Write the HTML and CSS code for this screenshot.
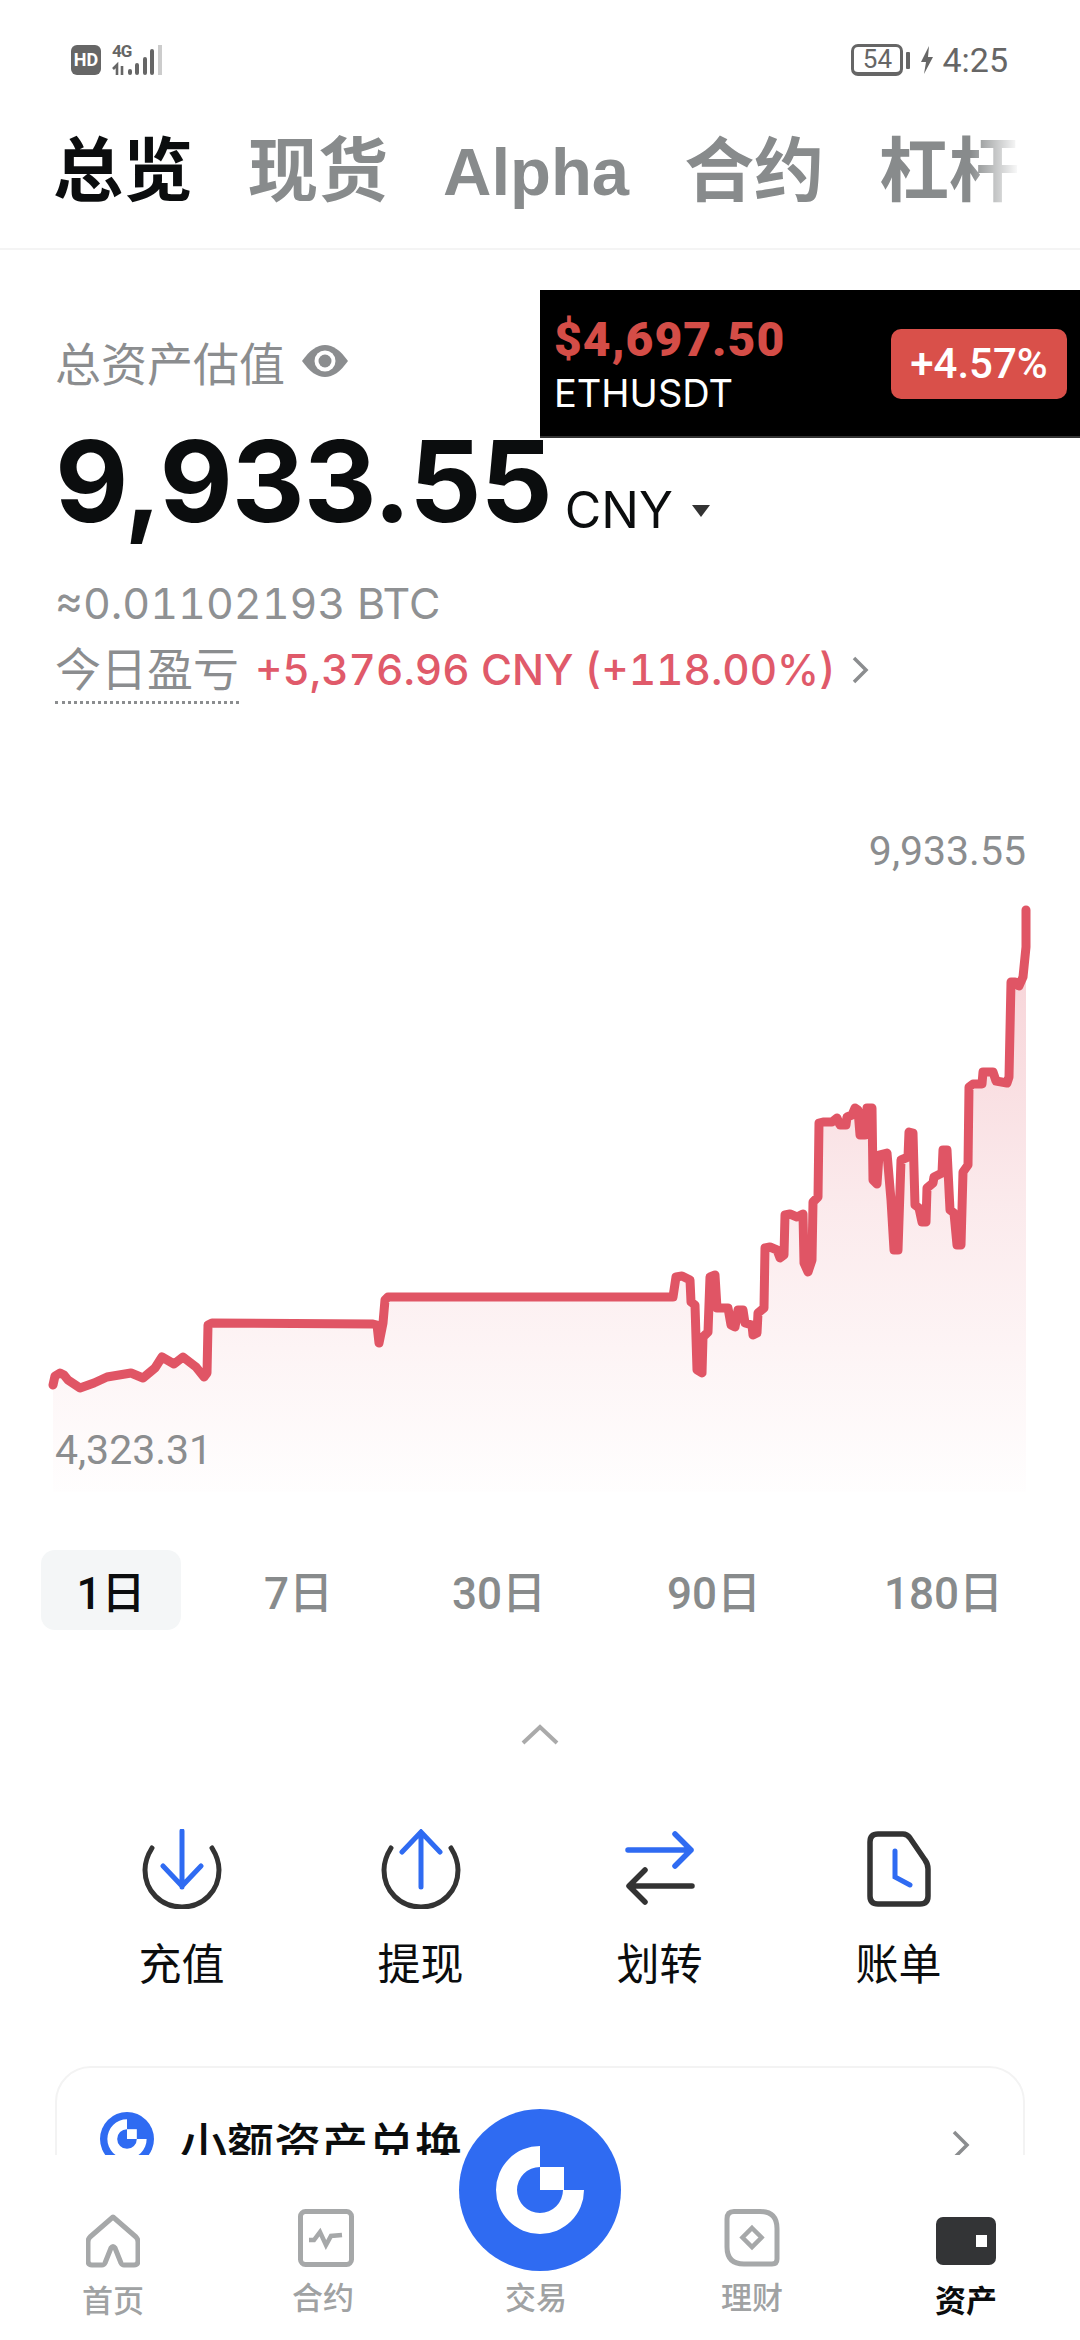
FILE: index.html
```html
<!DOCTYPE html>
<html lang="zh">
<head>
<meta charset="utf-8">
<title>资产总览</title>
<link rel="stylesheet" href="styles.css">
</head>
<body>
<div class="page">
  <main class="scroll">
    <header class="status">
      <div class="status-left">
        <span class="hd">HD</span>
        <span class="signal-wrap">
          <span class="sig-text">4G</span>
          <svg class="signal" width="44" height="30" viewBox="0 0 44 30">
            <path d="M1 24l4-4v10M10 21v9" stroke="#666" stroke-width="2.600" fill="none"/>
            <path d="M18 26v2M25 20v8M33 14v14M40 6v22" stroke="#666" stroke-width="4" fill="none" stroke-linecap="round"/>
          </svg>
        </span>
        <span class="signal-off"></span>
      </div>
      <div class="status-right">
        <span class="battery">54</span>
        <span class="battery-cap"></span>
        <svg class="bolt" width="14" height="28" viewBox="0 0 14 28"><path d="M9 0 1 16h5l-2 12 9-17H8z" fill="#666"/></svg>
        <span class="time">4:25</span>
      </div>
    </header>

    <nav class="tabs">
      <span class="tab tab-on">总览</span>
      <span class="tab">现货</span>
      <span class="tab tab-latin">Alpha</span>
      <span class="tab">合约</span>
      <span class="tab tab-fade">杠杆</span>
    </nav>

    <section class="summary">
      <div class="label-row">
        <span class="label">总资产估值</span>
        <svg class="eye" width="46" height="32" viewBox="0 0 46 32">
          <path d="M0 16C8 5 15 0 23 0s15 5 23 16c-8 11-15 16-23 16S8 27 0 16z" fill="#8b8d8f"/>
          <circle cx="23" cy="16" r="10.500" fill="#fff"/>
          <circle cx="23" cy="16" r="6.500" fill="#8b8d8f"/>
        </svg>
      </div>
      <div class="total-row">
        <span class="total">9,933.55</span>
        <span class="unit">CNY</span>
        <span class="caret"></span>
      </div>
      <div class="btc">≈0.01102193 BTC</div>
      <div class="pnl-row">
        <span class="pnl-label">今日盈亏</span>
        <span class="pnl">+5,376.96 CNY (+118.00%)</span>
        <svg class="pnl-chev" width="20" height="30" viewBox="0 0 20 30"><path d="M4 3l12 12L4 27" fill="none" stroke="#8b8d8f" stroke-width="3.500"/></svg>
      </div>
    </section>

    <section class="chart">
      <svg class="chart-svg" width="1080" height="680" viewBox="0 820 1080 680">
        <defs>
          <linearGradient id="area" gradientUnits="userSpaceOnUse" x1="0" y1="910" x2="0" y2="1510">
            <stop offset="0" stop-color="#e05565" stop-opacity=".28"/>
            <stop offset=".5" stop-color="#e05565" stop-opacity=".12"/>
            <stop offset="1" stop-color="#e05565" stop-opacity="0"/>
          </linearGradient>
        </defs>
        <path fill="url(#area)" d="M53 1385L60 1373 68 1380 80 1388 94 1383 107 1377 131 1373 143 1378 155 1368 162 1357 174 1364 183 1357 196 1367 204 1377 207 1373 208 1325 212 1323 373 1324 377 1325 379 1343 383 1323 385 1297 673 1297 676 1277 682 1276 690 1280 691 1302 695 1305 697 1370 702 1373 703 1337 708 1332 710 1277 715 1275 717 1308 728 1308 731 1325 735 1327 738 1310 743 1310 745 1323 752 1325 753 1335 757 1333 758 1313 764 1308 765 1248 770 1247 777 1250 780 1258 784 1255 785 1215 790 1214 797 1217 803 1214 804 1263 808 1272 812 1260 813 1202 818 1197 819 1123 823 1122 832 1122 837 1118 840 1125 846 1125 847 1117 852 1115 855 1108 858 1110 860 1135 865 1135 867 1108 872 1108 873 1180 877 1184 879 1155 887 1153 891 1200 894 1250 898 1250 901 1160 908 1157 909 1132 913 1133 915 1205 919 1208 922 1222 926 1222 927 1188 933 1183 934 1177 942 1173 943 1150 947 1150 950 1210 954 1213 957 1245 961 1245 963 1172 968 1165 969 1087 973 1084 982 1084 983 1072 993 1072 996 1081 1007 1083 1009 1077 1011 982 1015 982 1019 986 1023 977 1026 947 1026 910V1492H53Z"/>
        <path fill="none" stroke="#e05565" stroke-width="9" stroke-linejoin="round" stroke-linecap="round" d="M53 1385L55 1376 60 1373 64 1375 68 1380 80 1388 94 1383 107 1377 131 1373 143 1378 155 1368 162 1357 174 1364 183 1357 196 1367 204 1377 207 1373 208 1325 212 1323 373 1324 377 1325 379 1343 383 1323 385 1300 388 1297 673 1297 676 1277 682 1276 690 1280 691 1302 695 1305 697 1370 702 1373 703 1337 708 1332 710 1277 715 1275 717 1308 728 1308 731 1325 735 1327 738 1310 743 1310 745 1323 752 1325 753 1335 757 1333 758 1313 764 1308 765 1248 770 1247 777 1250 780 1258 784 1255 785 1215 790 1214 797 1217 803 1214 804 1263 808 1272 812 1260 813 1202 818 1197 819 1123 823 1122 832 1122 837 1118 840 1125 846 1125 847 1117 852 1115 855 1108 858 1110 860 1135 865 1135 867 1108 872 1108 873 1180 877 1184 879 1155 887 1153 891 1200 894 1250 898 1250 901 1160 908 1157 909 1132 913 1133 915 1205 919 1208 922 1222 926 1222 927 1188 933 1183 934 1177 942 1173 943 1150 947 1150 950 1210 954 1213 957 1245 961 1245 963 1172 968 1165 969 1087 973 1084 982 1084 983 1072 993 1072 996 1081 1007 1083 1009 1077 1011 982 1015 982 1019 986 1023 977 1026 947 1026 910"/>
      </svg>
      <span class="chart-max">9,933.55</span>
      <span class="chart-min">4,323.31</span>
    </section>

    <div class="ranges">
      <span class="range range-on">1日</span>
      <span class="range r7">7日</span>
      <span class="range r30">30日</span>
      <span class="range r90">90日</span>
      <span class="range r180">180日</span>
    </div>

    <div class="collapse">
      <svg width="38" height="22" viewBox="0 0 38 22"><path d="M2 20L19 4l17 16" fill="none" stroke="#aaa" stroke-width="4"/></svg>
    </div>

    <div class="actions">
      <div class="action">
        <svg class="action-icon" width="80" height="80" viewBox="0 0 80 80">
          <path d="M10 19C5 27 3 34 3 41c0 21 16 37 37 37s37-16 37-37c0-7-2-14-7-22" fill="none" stroke="#333" stroke-width="5" stroke-linecap="round"/>
          <path d="M40 2v56M21 37l19 20 19-20" fill="none" stroke="#2f6bf2" stroke-width="5" stroke-linecap="round"/>
        </svg>
        <span>充值</span>
      </div>
      <div class="action">
        <svg class="action-icon" width="80" height="80" viewBox="0 0 80 80">
          <path d="M10 19C5 27 3 34 3 41c0 21 16 37 37 37s37-16 37-37c0-7-2-14-7-22" fill="none" stroke="#333" stroke-width="5" stroke-linecap="round"/>
          <path d="M40 58V3M21 23L40 3l19 20" fill="none" stroke="#2f6bf2" stroke-width="5" stroke-linecap="round"/>
        </svg>
        <span>提现</span>
      </div>
      <div class="action">
        <svg class="action-icon" width="80" height="80" viewBox="0 0 80 80">
          <path d="M8 21h63M55 5l16 16-16 16" fill="none" stroke="#2f6bf2" stroke-width="5.500" stroke-linecap="round" stroke-linejoin="round"/>
          <path d="M72 57H10M25 41L9 57l16 16" fill="none" stroke="#333" stroke-width="5.500" stroke-linecap="round" stroke-linejoin="round"/>
        </svg>
        <span>划转</span>
      </div>
      <div class="action">
        <svg class="action-icon" width="80" height="80" viewBox="0 0 80 80">
          <path d="M19 5h25q4 0 7 4l15 22q3 4 3 9v27q0 8-8 8H19q-8 0-8-8V13q0-8 8-8z" fill="none" stroke="#333" stroke-width="5.500"/>
          <path d="M36 22v26l15 8" fill="none" stroke="#2f6bf2" stroke-width="5" stroke-linecap="round"/>
        </svg>
        <span>账单</span>
      </div>
    </div>

    <div class="card">
      <svg class="card-logo" width="54" height="54" viewBox="0 0 88 88">
        <circle cx="44" cy="44" r="44" fill="#2f6bf2"/>
        <path d="M44 12a32 32 0 1 0 32 32H60a16 16 0 1 1-16-16z" fill="#fff"/>
        <rect x="44" y="28" width="16" height="16" fill="#fff"/>
      </svg>
      <span class="card-title">小额资产兑换</span>
      <svg class="card-chev" width="20" height="30" viewBox="0 0 20 30"><path d="M3 2l13 13L3 28" fill="none" stroke="#8b8d8f" stroke-width="3.500"/></svg>
    </div>
  </main>

  <footer class="nav">
    <div class="nav-item nav-low">
      <svg width="54" height="54" viewBox="0 0 54 54"><path d="M27 3L4 23q-2 2-2 5v19q0 4 4 4h10q2 0 3-2l6-15q2-3 4 0l6 15q1 2 3 2h10q4 0 4-4V28q0-3-2-5z" fill="none" stroke="#a6a8a9" stroke-width="5" stroke-linejoin="round"/></svg>
      <span>首页</span>
    </div>
    <div class="nav-item nav-contract">
      <svg width="56" height="58" viewBox="0 0 56 58"><rect x="2.500" y="2.500" width="51" height="53" rx="5" fill="none" stroke="#a6a8a9" stroke-width="5"/><path d="M11 31l5 0 6-8 6 13 5-9 11-1" fill="none" stroke="#a6a8a9" stroke-width="4.500"/></svg>
      <span>合约</span>
    </div>
    <div class="nav-item nav-trade"><span>交易</span></div>
    <div class="nav-item">
      <svg width="56" height="58" viewBox="0 0 56 58"><path d="M10 2.500h26q17 0 17 17V50q0 5-5 5H20Q3 55 3 38V10q0-7.500 7-7.500z" fill="none" stroke="#a6a8a9" stroke-width="5"/><path d="M28 19l9.500 9.500L28 38l-9.500-9.500z" fill="none" stroke="#a6a8a9" stroke-width="4.500"/></svg>
      <span>理财</span>
    </div>
    <div class="nav-item nav-on nav-low">
      <svg width="60" height="48" viewBox="0 0 60 48"><rect width="60" height="48" rx="7" fill="#333436"/><rect x="40" y="18" width="11" height="12" fill="#fff"/></svg>
      <span>资产</span>
    </div>
  </footer>

  <svg class="fab" width="162" height="162" viewBox="0 0 162 162">
    <circle cx="81" cy="81" r="81" fill="#2f6bf2"/>
    <path d="M81 37a44 44 0 1 0 44 44h-21a23 23 0 1 1-23-23z" fill="#fff"/>
    <rect x="81" y="58" width="24" height="23" fill="#fff"/>
  </svg>

  <aside class="ticker">
    <div class="ticker-text">
      <span class="ticker-price">$4,697.50</span>
      <span class="ticker-name">ETHUSDT</span>
    </div>
    <span class="ticker-badge">+4.57%</span>
  </aside>
</div>
</body>
</html>
```
FILE: styles.css
```css
* { box-sizing: border-box; }
html, body { margin: 0; padding: 0; background: #fff; }
body { font-family: Inter, "Noto Sans CJK SC", sans-serif; color: #0b0d0e; }

.page { position: relative; width: 1080px; height: 2340px; overflow: hidden; background: #fff; display: flex; flex-direction: column; }
.scroll { flex: none; height: 2155px; overflow: hidden; }

/* status bar */
.status { height: 90px; padding: 45px 72px 0 71px; display: flex; justify-content: space-between; align-items: flex-start; }
.status-left, .status-right { display: flex; align-items: center; height: 30px; }
.hd { width: 30px; height: 30px; border-radius: 6px; background: #666; color: #fff; font: 700 18px/30px Roboto, sans-serif; text-align: center; }
.signal-wrap { position: relative; width: 44px; height: 30px; margin-left: 11px; }
.signal { display: block; }
.sig-text { position: absolute; left: 0; top: -2px; font: 700 17px/17px Roboto, sans-serif; color: #666; letter-spacing: -1px; }
.signal-off { width: 4px; height: 30px; margin-left: 2px; background: #ccc; }
.battery { width: 52px; height: 32px; border: 3px solid #666; border-bottom-width: 4px; border-radius: 7px; color: #666; font: 400 26px/25px Roboto, sans-serif; text-align: center; }
.battery-cap { width: 4px; height: 17px; margin-left: 3px; background: #666; border-radius: 1px; }
.bolt { margin-left: 10px; }
.time { margin-left: 8px; color: #666; font: 400 34px/30px Roboto, sans-serif; }

/* tabs */
.tabs { height: 160px; padding: 6px 0 0 53px; display: flex; align-items: center; gap: 55px; border-bottom: 2px solid #f4f4f4; white-space: nowrap; overflow: hidden; }
.tab { position: relative; font: 700 70px/80px "Liberation Sans", "Noto Sans CJK SC", sans-serif; color: #888b8c; }
.tab-latin { font-size: 67px; }
.tab-on { color: #0b0d0e; }
.tab-fade::after { content: ""; position: absolute; top: 0; right: -1px; bottom: 0; width: 50px; background: linear-gradient(90deg, rgba(255,255,255,0), #fff); }

/* summary */
.summary { padding: 81px 0 0 55px; height: 520px; }
.label-row { display: flex; align-items: center; height: 60px; }
.label { font: 400 46px/60px "Noto Sans CJK SC", sans-serif; color: #8b8d8f; }
.eye { margin-left: 17px; }
.total-row { display: flex; align-items: flex-start; margin-top: 20px; height: 140px; }
.total { font: 700 113px/140px Inter, sans-serif; letter-spacing: -1px; color: #0b0d0e; }
.unit { margin: 69px 0 0 13px; font: 400 50px/60px Inter, sans-serif; color: #0b0d0e; }
.caret { margin: 94px 0 0 19px; width: 0; height: 0; border-left: 9px solid transparent; border-right: 9px solid transparent; border-top: 12px solid #333; }
.btc { margin-top: 27px; font: 400 43px/50px Inter, sans-serif; font-variant-numeric: tabular-nums; color: #8f9193; }
.pnl-row { display: flex; align-items: center; height: 64px; margin-top: 10px; }
.pnl-label { font: 400 46px/60px "Noto Sans CJK SC", sans-serif; color: #8b8d8f; border-bottom: 3px dotted #8b8d8f; height: 68px; }
.pnl { margin-left: 16px; font: 500 42.300px/60px Inter, sans-serif; font-variant-numeric: tabular-nums; color: #e05a6a; }
.pnl-chev { margin-left: 14px; }

/* chart */
.chart { position: relative; height: 680px; margin-top: 50px; }
.chart-svg { display: block; }
.chart-max, .chart-min { position: absolute; font: 400 41px/44px Roboto, sans-serif; color: #8b8d8f; }
.chart-max { top: 9px; right: 54px; }
.chart-min { top: 608px; left: 55px; }

/* ranges */
.ranges { position: relative; height: 80px; margin-top: 50px; display: flex; align-items: center; padding-left: 41px; }
.range { height: 80px; font: 500 44px/88px Roboto, "Noto Sans CJK SC", sans-serif; color: #888b8c; }
.range-on { width: 140px; background: #f4f6f7; border-radius: 14px; color: #0b0d0e; text-align: center; }
.r7 { margin-left: 83px; }
.r30 { margin-left: 119px; }
.r90 { margin-left: 121px; }
.r180 { margin-left: 123px; }

/* collapse */
.collapse { height: 90px; margin-top: 93px; text-align: center; line-height: 0; }

/* actions */
.actions { display: grid; grid-template-columns: repeat(4, 239px); padding-left: 62px; margin-top: 16px; }
.action { display: flex; flex-direction: column; align-items: center; font: 400 43px/56px "Noto Sans CJK SC", sans-serif; color: #0b0d0e; }
.action-icon { display: block; margin-bottom: 24px; }

/* card */
.card { margin: 77px 55px 0; height: 160px; padding: 44px 52px 0 43px; border: 2px solid #f3f3f3; border-radius: 36px; display: flex; align-items: flex-start; }
.card-logo { flex: none; }
.card-title { margin-left: 26px; font: 500 47px/60px "Noto Sans CJK SC", sans-serif; color: #0b0d0e; }
.card-chev { margin: 18px 0 0 auto; }

/* bottom nav */
.nav { position: relative; flex: none; height: 185px; background: #fff; display: grid; grid-template-columns: 226px 194px 232px 200px 228px; padding-top: 54px; }
.nav-item { display: flex; flex-direction: column; align-items: center; font: 500 31px/40px "Noto Sans CJK SC", sans-serif; color: #a0a2a3; }
.nav-item svg { display: block; margin-bottom: 9px; height: 58px; }
.nav-contract svg { margin-left: 6px; }
.nav-low svg { margin-top: 5px; margin-bottom: 11px; height: 54px; }
.nav-trade { padding-top: 67px; }
.nav-on { color: #0b0d0e; font-weight: 700; }

/* floating */
.fab { position: absolute; left: 459px; top: 2109px; }
.ticker { position: absolute; left: 540px; top: 290px; width: 540px; height: 148px; background: #000; border-bottom: 2px solid #333; display: flex; align-items: flex-start; justify-content: space-between; padding: 24px 13px 0 14px; }
.ticker-text { display: flex; flex-direction: column; }
.ticker-price { font: 900 48px/52px Roboto, sans-serif; color: #d44d47; letter-spacing: 1px; }
.ticker-name { margin-top: 5px; font: 400 38px/44px Inter, sans-serif; color: #fff; }
.ticker-badge { margin-top: 15px; width: 176px; height: 70px; border-radius: 10px; background: #d9504a; color: #fff; font: 500 42px/70px Roboto, sans-serif; text-align: center; }
```
